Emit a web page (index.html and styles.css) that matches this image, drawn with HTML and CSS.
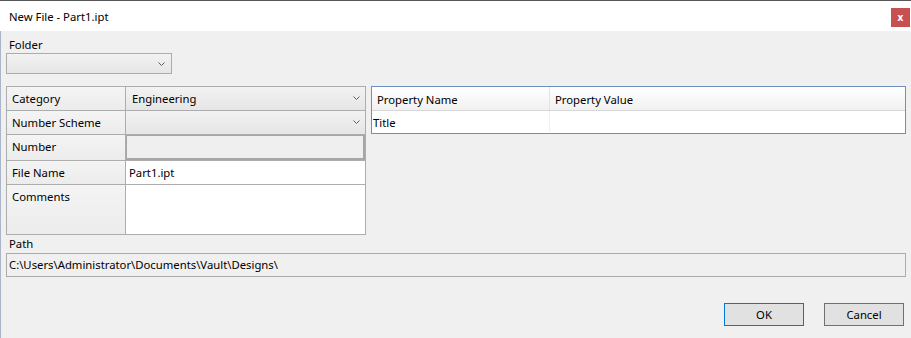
FILE: index.html
```html
<!DOCTYPE html>
<html>
<head>
<meta charset="utf-8">
<link rel="stylesheet" href="styles.css">
</head>
<body>
<div class="window">
  <div class="titlebar">
    <span class="title">New File - Part1.ipt</span>
    <span class="close">x</span>
  </div>
  <div class="content">
    <div class="label">Folder</div>
    <div class="combo folder">
      <svg class="chev" width="7" height="4" viewBox="0 0 7 4"><polyline points="0.5,0.5 3.5,3.5 6.5,0.5" fill="none" stroke="#606060" stroke-width="1"/></svg>
    </div>
    <div class="main">
      <div class="props">
        <div class="cell lbl">Category</div>
        <div class="cell val combo-cell">Engineering
          <svg class="chev" width="7" height="4" viewBox="0 0 7 4"><polyline points="0.5,0.5 3.5,3.5 6.5,0.5" fill="none" stroke="#606060" stroke-width="1"/></svg>
        </div>
        <div class="cell lbl">Number Scheme</div>
        <div class="cell val combo-cell">
          <svg class="chev" width="7" height="4" viewBox="0 0 7 4"><polyline points="0.5,0.5 3.5,3.5 6.5,0.5" fill="none" stroke="#606060" stroke-width="1"/></svg>
        </div>
        <div class="cell lbl">Number</div>
        <div class="cell val disabled"></div>
        <div class="cell lbl">File Name</div>
        <div class="cell val text">Part1.ipt</div>
        <div class="cell lbl top">Comments</div>
        <div class="cell val text"></div>
      </div>
      <div class="grid">
        <div class="ghead">
          <div class="gcol c1">Property Name</div>
          <div class="gcol c2">Property Value</div>
        </div>
        <div class="grow">
          <div class="gcell c1">Title</div>
          <div class="gcell c2"></div>
        </div>
      </div>
    </div>
    <div class="label path-label">Path</div>
    <div class="pathbox">C:\Users\Administrator\Documents\Vault\Designs\</div>
    <div class="buttons">
      <button class="btn default">OK</button>
      <button class="btn">Cancel</button>
    </div>
  </div>
</div>
</body>
</html>
```
FILE: styles.css
```css
* { box-sizing: border-box; }
html, body { margin: 0; padding: 0; }
body {
  width: 911px;
  height: 338px;
  overflow: hidden;
  font-family: "Noto Sans", "Open Sans", sans-serif;
  font-size: 11.3px;
  color: #000;
  background: #f0f0f0;
}
.window {
  width: 911px;
  height: 338px;
  border-top: 1px solid #555;
  display: flex;
  flex-direction: column;
}
.titlebar {
  height: 30px;
  background: #fff;
  display: flex;
  align-items: flex-start;
  justify-content: space-between;
  padding-left: 9px;
  padding-right: 1px;
}
.title {
  line-height: 16px;
  margin-top: 8px;
}
.close {
  width: 19px;
  height: 19px;
  margin-top: 7px;
  background: #c75050;
  color: #fff;
  font-weight: bold;
  font-size: 10px;
  line-height: 18px;
  text-align: center;
}
.content {
  flex: 1;
  border-left: 1px solid #aab5c8;
  padding: 6px 5px 0 5px;
  display: flex;
  flex-direction: column;
}
.label {
  height: 16px;
  line-height: 16px;
  padding-left: 3px;
}
.combo {
  background: linear-gradient(#f2f2f2, #e6e6e6);
  border: 1px solid #acacac;
  position: relative;
}
.folder {
  width: 166px;
  height: 21px;
  margin-bottom: 12px;
}
.chev {
  position: absolute;
  right: 6px;
  top: 8px;
}
.main {
  display: flex;
  align-items: flex-start;
  gap: 5px;
}
.props {
  display: grid;
  grid-template-columns: 118px 239px;
  grid-template-rows: 23px 23px 25px 23px 49px;
  gap: 1px;
  padding: 1px;
  background: #adadad;
  width: 360px;
}
.cell {
  line-height: 24px;
  white-space: nowrap;
}
.lbl {
  background: linear-gradient(#f4f4f4, #ececec);
  padding-left: 5px;
}
.val { position: relative; }
.combo-cell {
  background: linear-gradient(#f2f2f2, #e6e6e6);
  padding-left: 6px;
}
.combo-cell .chev { right: 5px; top: 9px; }
.disabled {
  background: #efefef;
  box-shadow: inset 0 0 0 1px #a6a6a6, inset -1px -1px 0 1px #a6a6a6;
}
.text {
  background: #fff;
  padding-left: 3px;
}
.grid {
  width: 535px;
  height: 48px;
  border: 1px solid #6f8fbf;
  background: #fff;
}
.ghead {
  display: flex;
  height: 24px;
  background: linear-gradient(#ffffff, #f1f1f1);
  border-bottom: 1px solid #d6d6d6;
}
.gcol {
  line-height: 25px;
  padding-left: 5px;
}
.c1 { width: 178px; border-right: 1px solid #e3e3e3; }
.c2 { flex: 1; }
.grow {
  display: flex;
  height: 21px;
}
.gcell {
  line-height: 23px;
}
.grow .c1 { padding-left: 1px; border-right: 1px solid #f0f0f0; }
.path-label {
  margin-top: 1px;
  height: 17px;
  line-height: 15px;
}
.pathbox {
  height: 24px;
  border: 1px solid #acacac;
  background: #f0f0f0;
  line-height: 21px;
  padding-left: 2px;
  white-space: nowrap;
}
.buttons {
  display: flex;
  justify-content: flex-end;
  gap: 20px;
  margin-top: 26px;
  padding-right: 2px;
}
.btn {
  width: 80px;
  height: 23px;
  border: 1px solid #707070;
  background: #e1e1e1;
  font-family: inherit;
  font-size: 11.3px;
  color: #000;
  padding: 0;
  line-height: 22px;
}
.btn.default {
  border-color: #0078d7;
}
```
